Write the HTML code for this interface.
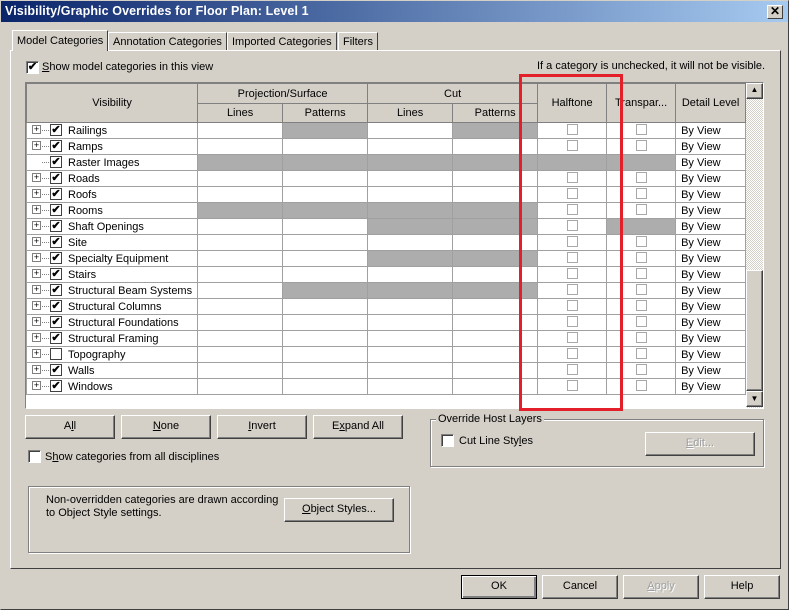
<!DOCTYPE html>
<html><head><meta charset="utf-8"><style>
*{box-sizing:border-box;margin:0;padding:0}
body{width:789px;height:610px;background:#d4d0c8;font-family:"Liberation Sans",sans-serif;font-size:11px;color:#000;position:relative;overflow:hidden}
.a{position:absolute}
.title{left:0;top:0;width:789px;height:22px;background:linear-gradient(90deg,#0a246a,#a6caf0);color:#fff;font-weight:bold;font-size:12.5px;padding:4px 5px;letter-spacing:0.1px}
.close{left:767px;top:5px;width:16px;height:14px;background:#d4d0c8;border:1px solid;border-color:#fff #404040 #404040 #fff;font-size:12px;line-height:11px;text-align:center;font-weight:bold;color:#000}
.btn{position:absolute;background:#d4d0c8;border:1px solid;border-color:#fff #404040 #404040 #fff;box-shadow:inset -1px -1px 0 #808080;text-align:center;line-height:21px;font-size:11px}
.cb{position:absolute;width:13px;height:13px;background:#fff;border:1px solid;border-color:#808080 #fff #fff #808080;box-shadow:inset 1px 1px 0 #404040}
.tab{position:absolute;top:32px;height:18px;border:1px solid;border-bottom:none;border-color:#fff #404040 #404040 #fff;padding:3px 4px;font-size:11px}
table{position:absolute;left:26px;top:83px;border-collapse:collapse;table-layout:fixed;background:#fff}
td{border:1px solid #a0a0a0;height:16px;padding:0 5px;font-size:11px;line-height:14px;white-space:nowrap;overflow:hidden}
th{background:#d4d0c8;border:1px solid #808080;font-weight:normal;font-size:11px;text-align:center}
.h{background:repeating-conic-gradient(#6e6e6e 0 25%,#ececec 0 50%) 0 0/2px 2px}
.c{text-align:center}
.sq{display:inline-block;width:11px;height:11px;border:1px solid #a8a8a8;vertical-align:middle;margin-top:-2px}
.v{padding-left:5px;position:relative}
.pl{display:inline-block;width:9px;height:9px;border:1px solid #808080;font-size:9px;line-height:6px;text-align:center;vertical-align:middle;margin-top:-2px;color:#000}
.dt{display:inline-block;width:7px;border-top:1px dotted #808080;vertical-align:middle;margin:0 1px}
.ck{display:inline-block;width:12px;height:12px;border:1px solid #404040;background:#fff;font-size:11px;line-height:10px;text-align:center;vertical-align:middle;margin-top:-2px;font-weight:bold;margin-right:6px}
.grp{position:absolute;border:1px solid #808080;box-shadow:1px 1px 0 #fff, inset 1px 1px 0 #fff}
</style></head><body>
<div class="a title">Visibility/Graphic Overrides for Floor Plan: Level 1</div>
<div class="a close">✕</div>

<div class="a" style="left:10px;top:50px;width:771px;height:519px;border:1px solid;border-color:#fff #404040 #404040 #fff"></div>
<div class="tab" style="left:12px;top:30px;height:21px;background:#d4d0c8;border-bottom:none;z-index:2;padding-top:4px">Model Categories</div>
<div class="tab" style="left:108px">Annotation Categories</div>
<div class="tab" style="left:227px">Imported Categories</div>
<div class="tab" style="left:338px">Filters</div>

<div class="cb" style="left:26px;top:61px;font-size:11px;line-height:10px;text-align:center;font-weight:bold">✔</div>
<div class="a" style="left:42px;top:61px"><u>S</u>how model categories in this view</div>
<div class="a" style="left:537px;top:60px">If a category is unchecked, it will not be visible.</div>

<div class="a" style="left:25px;top:82px;width:739px;height:327px;border:1px solid;border-color:#808080 #fff #fff #808080;background:#fff"></div>
<table>
<colgroup><col style="width:171px"><col style="width:85px"><col style="width:85px"><col style="width:85px"><col style="width:85px"><col style="width:69px"><col style="width:69px"><col style="width:70px"></colgroup>
<tr style="height:20px"><th rowspan="2">Visibility</th><th colspan="2">Projection/Surface</th><th colspan="2">Cut</th><th rowspan="2">Halftone</th><th rowspan="2">Transpar...</th><th rowspan="2">Detail Level</th></tr>
<tr style="height:19px"><th>Lines</th><th>Patterns</th><th>Lines</th><th>Patterns</th></tr>
<tr><td class="v"><span class="pl">+</span><span class="dt"></span><span class="ck">✔</span>Railings</td><td></td><td class="h"></td><td></td><td class="h"></td><td class="c"><span class="sq"></span></td><td class="c"><span class="sq"></span></td><td>By View</td></tr>
<tr><td class="v"><span class="pl">+</span><span class="dt"></span><span class="ck">✔</span>Ramps</td><td></td><td></td><td></td><td></td><td class="c"><span class="sq"></span></td><td class="c"><span class="sq"></span></td><td>By View</td></tr>
<tr><td class="v"><span class="pl" style="border-color:transparent"></span><span class="dt"></span><span class="ck">✔</span>Raster Images</td><td class="h"></td><td class="h"></td><td class="h"></td><td class="h"></td><td class="h"></td><td class="h"></td><td>By View</td></tr>
<tr><td class="v"><span class="pl">+</span><span class="dt"></span><span class="ck">✔</span>Roads</td><td></td><td></td><td></td><td></td><td class="c"><span class="sq"></span></td><td class="c"><span class="sq"></span></td><td>By View</td></tr>
<tr><td class="v"><span class="pl">+</span><span class="dt"></span><span class="ck">✔</span>Roofs</td><td></td><td></td><td></td><td></td><td class="c"><span class="sq"></span></td><td class="c"><span class="sq"></span></td><td>By View</td></tr>
<tr><td class="v"><span class="pl">+</span><span class="dt"></span><span class="ck">✔</span>Rooms</td><td class="h"></td><td class="h"></td><td class="h"></td><td class="h"></td><td class="c"><span class="sq"></span></td><td class="c"><span class="sq"></span></td><td>By View</td></tr>
<tr><td class="v"><span class="pl">+</span><span class="dt"></span><span class="ck">✔</span>Shaft Openings</td><td></td><td></td><td class="h"></td><td class="h"></td><td class="c"><span class="sq"></span></td><td class="h"></td><td>By View</td></tr>
<tr><td class="v"><span class="pl">+</span><span class="dt"></span><span class="ck">✔</span>Site</td><td></td><td></td><td></td><td></td><td class="c"><span class="sq"></span></td><td class="c"><span class="sq"></span></td><td>By View</td></tr>
<tr><td class="v"><span class="pl">+</span><span class="dt"></span><span class="ck">✔</span>Specialty Equipment</td><td></td><td></td><td class="h"></td><td class="h"></td><td class="c"><span class="sq"></span></td><td class="c"><span class="sq"></span></td><td>By View</td></tr>
<tr><td class="v"><span class="pl">+</span><span class="dt"></span><span class="ck">✔</span>Stairs</td><td></td><td></td><td></td><td></td><td class="c"><span class="sq"></span></td><td class="c"><span class="sq"></span></td><td>By View</td></tr>
<tr><td class="v"><span class="pl">+</span><span class="dt"></span><span class="ck">✔</span>Structural Beam Systems</td><td></td><td class="h"></td><td class="h"></td><td class="h"></td><td class="c"><span class="sq"></span></td><td class="c"><span class="sq"></span></td><td>By View</td></tr>
<tr><td class="v"><span class="pl">+</span><span class="dt"></span><span class="ck">✔</span>Structural Columns</td><td></td><td></td><td></td><td></td><td class="c"><span class="sq"></span></td><td class="c"><span class="sq"></span></td><td>By View</td></tr>
<tr><td class="v"><span class="pl">+</span><span class="dt"></span><span class="ck">✔</span>Structural Foundations</td><td></td><td></td><td></td><td></td><td class="c"><span class="sq"></span></td><td class="c"><span class="sq"></span></td><td>By View</td></tr>
<tr><td class="v"><span class="pl">+</span><span class="dt"></span><span class="ck">✔</span>Structural Framing</td><td></td><td></td><td></td><td></td><td class="c"><span class="sq"></span></td><td class="c"><span class="sq"></span></td><td>By View</td></tr>
<tr><td class="v"><span class="pl">+</span><span class="dt"></span><span class="ck"></span>Topography</td><td></td><td></td><td></td><td></td><td class="c"><span class="sq"></span></td><td class="c"><span class="sq"></span></td><td>By View</td></tr>
<tr><td class="v"><span class="pl">+</span><span class="dt"></span><span class="ck">✔</span>Walls</td><td></td><td></td><td></td><td></td><td class="c"><span class="sq"></span></td><td class="c"><span class="sq"></span></td><td>By View</td></tr>
<tr><td class="v"><span class="pl">+</span><span class="dt"></span><span class="ck">✔</span>Windows</td><td></td><td></td><td></td><td></td><td class="c"><span class="sq"></span></td><td class="c"><span class="sq"></span></td><td>By View</td></tr>
</table>

<div class="a" style="left:746px;top:83px;width:17px;height:325px;background:repeating-conic-gradient(#d4d0c8 0 25%,#fff 0 50%) 0 0/2px 2px"></div>
<div class="btn" style="left:746px;top:83px;width:17px;height:16px;line-height:12px;font-size:8px">▲</div>
<div class="btn" style="left:746px;top:270px;width:17px;height:121px"></div>
<div class="btn" style="left:746px;top:391px;width:17px;height:16px;line-height:14px;font-size:8px">▼</div>

<div class="a" style="left:519px;top:74px;width:104px;height:337px;border:3px solid #e3202a"></div>

<div class="btn" style="left:25px;top:415px;width:90px;height:24px">A<u>l</u>l</div>
<div class="btn" style="left:121px;top:415px;width:90px;height:24px"><u>N</u>one</div>
<div class="btn" style="left:217px;top:415px;width:90px;height:24px"><u>I</u>nvert</div>
<div class="btn" style="left:313px;top:415px;width:90px;height:24px">E<u>x</u>pand All</div>

<div class="cb" style="left:28px;top:450px"></div>
<div class="a" style="left:45px;top:451px">S<u>h</u>ow categories from all disciplines</div>

<div class="grp" style="left:28px;top:486px;width:382px;height:67px"></div>
<div class="a" style="left:46px;top:494px;line-height:13px">Non-overridden categories are drawn according<br>to Object Style settings.</div>
<div class="btn" style="left:284px;top:498px;width:110px;height:24px"><u>O</u>bject Styles...</div>

<div class="grp" style="left:430px;top:419px;width:334px;height:48px"></div>
<div class="a" style="left:436px;top:413px;background:#d4d0c8;padding:0 2px">Override Host Layers</div>
<div class="cb" style="left:441px;top:434px"></div>
<div class="a" style="left:459px;top:435px">Cut Line Sty<u>l</u>es</div>
<div class="btn" style="left:645px;top:432px;width:110px;height:24px;color:#a0a0a0;text-shadow:1px 1px 0 #fff"><u>E</u>dit...</div>

<div class="btn" style="left:461px;top:575px;width:76px;height:24px;border:1px solid #000;box-shadow:inset 1px 1px 0 #fff,inset -2px -2px 0 #808080">OK</div>
<div class="btn" style="left:542px;top:575px;width:76px;height:24px">Cancel</div>
<div class="btn" style="left:623px;top:575px;width:76px;height:24px;color:#a0a0a0;text-shadow:1px 1px 0 #fff"><u>A</u>pply</div>
<div class="btn" style="left:704px;top:575px;width:76px;height:24px">Help</div>
<div class="a" style="left:0;top:0;width:789px;height:610px;border:1px solid;border-color:#d4d0c8 #404040 #404040 #d4d0c8;pointer-events:none"></div>
</body></html>
